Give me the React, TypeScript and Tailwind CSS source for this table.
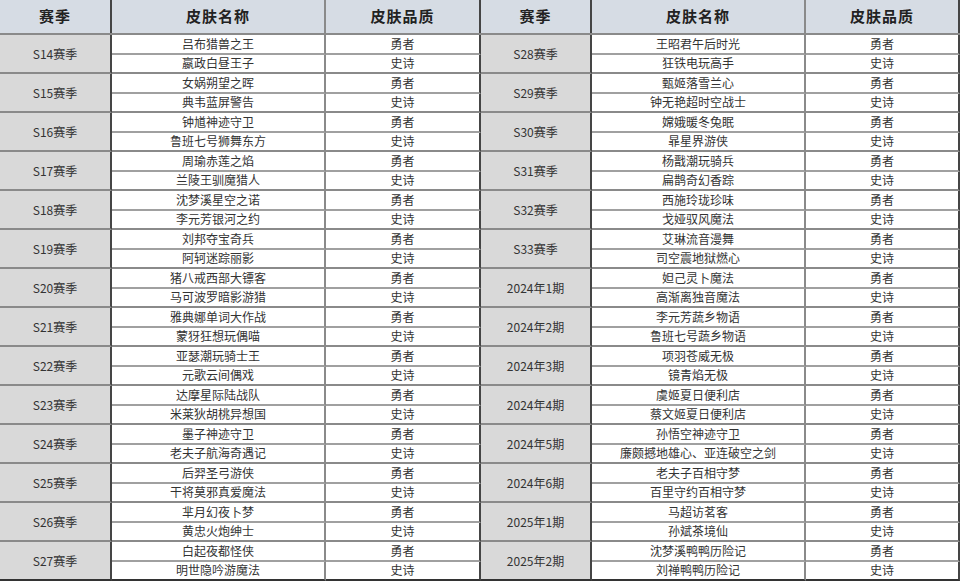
import React from "react";

type Group = { season: string; skins: [string, string] };

const leftGroups: Group[] = [
  { season: "S14赛季", skins: ["吕布猎兽之王", "嬴政白昼王子"] },
  { season: "S15赛季", skins: ["女娲朔望之晖", "典韦蓝屏警告"] },
  { season: "S16赛季", skins: ["钟馗神迹守卫", "鲁班七号狮舞东方"] },
  { season: "S17赛季", skins: ["周瑜赤莲之焰", "兰陵王驯魔猎人"] },
  { season: "S18赛季", skins: ["沈梦溪星空之诺", "李元芳银河之约"] },
  { season: "S19赛季", skins: ["刘邦夺宝奇兵", "阿轲迷踪丽影"] },
  { season: "S20赛季", skins: ["猪八戒西部大镖客", "马可波罗暗影游猎"] },
  { season: "S21赛季", skins: ["雅典娜单词大作战", "蒙犽狂想玩偶喵"] },
  { season: "S22赛季", skins: ["亚瑟潮玩骑士王", "元歌云间偶戏"] },
  { season: "S23赛季", skins: ["达摩星际陆战队", "米莱狄胡桃异想国"] },
  { season: "S24赛季", skins: ["墨子神迹守卫", "老夫子航海奇遇记"] },
  { season: "S25赛季", skins: ["后羿圣弓游侠", "干将莫邪真爱魔法"] },
  { season: "S26赛季", skins: ["芈月幻夜卜梦", "黄忠火炮绅士"] },
  { season: "S27赛季", skins: ["白起夜都怪侠", "明世隐吟游魔法"] },
];

const rightGroups: Group[] = [
  { season: "S28赛季", skins: ["王昭君午后时光", "狂铁电玩高手"] },
  { season: "S29赛季", skins: ["甄姬落雪兰心", "钟无艳超时空战士"] },
  { season: "S30赛季", skins: ["嫦娥暖冬兔眠", "暃星界游侠"] },
  { season: "S31赛季", skins: ["杨戬潮玩骑兵", "扁鹊奇幻香踪"] },
  { season: "S32赛季", skins: ["西施玲珑珍味", "戈娅驭风魔法"] },
  { season: "S33赛季", skins: ["艾琳流音漫舞", "司空震地狱燃心"] },
  { season: "2024年1期", skins: ["妲己灵卜魔法", "高渐离独音魔法"] },
  { season: "2024年2期", skins: ["李元芳蔬乡物语", "鲁班七号蔬乡物语"] },
  { season: "2024年3期", skins: ["项羽苍威无极", "镜青焰无极"] },
  { season: "2024年4期", skins: ["虞姬夏日便利店", "蔡文姬夏日便利店"] },
  { season: "2024年5期", skins: ["孙悟空神迹守卫", "廉颇撼地雄心、亚连破空之剑"] },
  { season: "2024年6期", skins: ["老夫子百相守梦", "百里守约百相守梦"] },
  { season: "2025年1期", skins: ["马超访茗客", "孙斌茶境仙"] },
  { season: "2025年2期", skins: ["沈梦溪鸭鸭历险记", "刘禅鸭鸭历险记"] },
];

const qualities = ["勇者", "史诗"];

const Half = ({ group, last, right }: { group: Group; last: boolean; right?: boolean }) => {
  const bottom = last ? "border-b-2 border-b-[#333]" : "border-b-2 border-b-[#8a8a8a]";
  return (
    <div className="flex h-full">
      <div
        className={`${right ? "w-[111px]" : "w-[112px]"} shrink-0 bg-[#d9d9d9] flex items-center justify-center border-r-2 border-r-[#454545] ${bottom}`}
      >
        {group.season}
      </div>
      <div className="flex flex-col">
        {group.skins.map((skin, i) => (
          <div key={skin} className="flex h-[19.5px]">
            <div
              className={`w-[214px] shrink-0 flex items-center justify-center border-r-2 border-r-[#8a8a8a] ${
                i === 1 ? bottom : "border-b-2 border-b-[#a0a0a0]"
              }`}
            >
              {skin}
            </div>
            <div
              className={`${right ? "w-[154px]" : "w-[155px]"} shrink-0 flex items-center justify-center border-r-2 border-r-[#454545] ${
                i === 1 ? bottom : "border-b-2 border-b-[#a0a0a0]"
              }`}
            >
              {qualities[i]}
            </div>
          </div>
        ))}
      </div>
    </div>
  );
};

const HeaderHalf = ({ right }: { right?: boolean }) => (
  <div className="flex h-full">
    <div
      className={`${right ? "w-[111px]" : "w-[112px]"} flex items-center justify-center border-r-2 border-r-[#454545]`}
    >
      赛季
    </div>
    <div className="w-[214px] flex items-center justify-center border-r-2 border-r-[#8a8a8a]">皮肤名称</div>
    <div
      className={`${right ? "w-[154px]" : "w-[155px]"} flex items-center justify-center border-r-2 border-r-[#454545]`}
    >
      皮肤品质
    </div>
  </div>
);

export default function App() {
  return (
    <div
      className="w-[960px] h-[581px] bg-white text-[#333] text-[12px] overflow-hidden"
      style={{ fontFamily: '"Noto Sans CJK SC", "Noto Sans", sans-serif' }}
    >
      <div className="flex h-[35px] bg-[#d6dce4] border-b-2 border-b-[#8a8a8a] text-[15px] font-bold text-[#222] tracking-[1px]">
        <HeaderHalf />
        <HeaderHalf right />
      </div>
      {leftGroups.map((g, idx) => (
        <div key={g.season} className="flex h-[39px]">
          <Half group={g} last={idx === leftGroups.length - 1} />
          <Half group={rightGroups[idx]} last={idx === leftGroups.length - 1} right />
        </div>
      ))}
    </div>
  );
}
